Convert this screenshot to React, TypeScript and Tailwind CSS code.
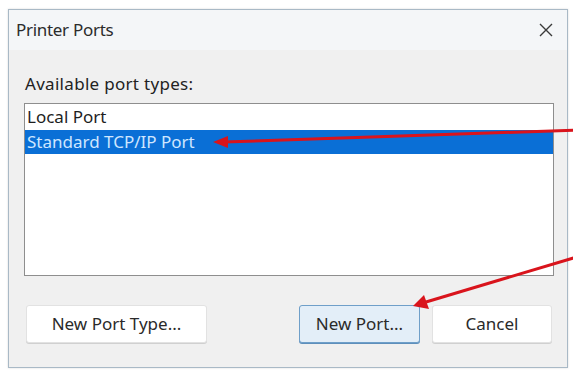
export default function App() {
  const font = { fontFamily: '"Noto Sans", "Open Sans", sans-serif' };

  return (
    <div className="relative w-[573px] h-[371px] bg-white overflow-hidden" style={font}>
      {/* Dialog window */}
      <div className="ml-[8px] mt-[9px] w-[560px] h-[359px] border border-[#a9b9c6] bg-[#f0f0f0] flex flex-col shadow-[0_0_2px_rgba(0,0,0,0.15)]">
        {/* Title bar */}
        <div className="h-[40px] flex items-center justify-between pl-[7px] pr-[10px] bg-[#f4f6f8]">
          <span className="text-[17px] text-[#2b2b2b] tracking-[-0.3px]">Printer Ports</span>
          <svg width="16" height="16" viewBox="0 0 16 16" className="text-[#3a3a3a] mr-[3px]">
            <path d="M2 2 L14 14 M14 2 L2 14" stroke="currentColor" strokeWidth="1.4" />
          </svg>
        </div>

        {/* Body */}
        <div className="flex-1 flex flex-col px-[15px]">
          <div className="mt-[24px] text-[17px] text-[#222] leading-[20px] pl-[1px] tracking-[0.3px]">Available port types:</div>

          <div className="mt-[9px] w-[530px] h-[173px] border border-[#8e8e8e] bg-white flex flex-col">
            <div className="h-[26px] flex items-center pl-[2px] text-[17px] text-[#1e1e1e]">Local Port</div>
            <div className="h-[24px] flex items-center pl-[2px] text-[17px] text-[#cfe6ff] bg-[#0a6fd6]">
              Standard TCP/IP Port
            </div>
          </div>

          {/* Buttons */}
          <div className="mt-[29px] flex items-center">
            <button className="ml-[2px] w-[181px] h-[38px] bg-white border border-[#e2e2e2] rounded-[3px] text-[17px] text-[#2a2a2a] shadow-[0_1px_0_#d0d0d0]">
              New Port Type...
            </button>
            <button className="ml-[92px] w-[121px] h-[38px] bg-[#e3eef8] border border-[#6f9fc9] rounded-[3px] text-[17px] text-[#2a2a2a] shadow-[0_1px_0_#5e8fbb]">
              New Port...
            </button>
            <button className="ml-[12px] w-[120px] h-[38px] bg-white border border-[#e2e2e2] rounded-[3px] text-[17px] text-[#2a2a2a] shadow-[0_1px_0_#d0d0d0]">
              Cancel
            </button>
          </div>
        </div>
      </div>

      {/* Red annotation arrows */}
      <svg className="absolute inset-0 pointer-events-none" width="573" height="371" viewBox="0 0 573 371">
        <line x1="580" y1="130" x2="224" y2="142" stroke="#d9141c" strokeWidth="3" />
        <polygon points="213,142 228,136 228,148" fill="#d9141c" />
        <line x1="580" y1="256" x2="426" y2="302" stroke="#d9141c" strokeWidth="3" />
        <polygon points="413,306 424,295 429,309" fill="#d9141c" />
      </svg>
    </div>
  );
}
